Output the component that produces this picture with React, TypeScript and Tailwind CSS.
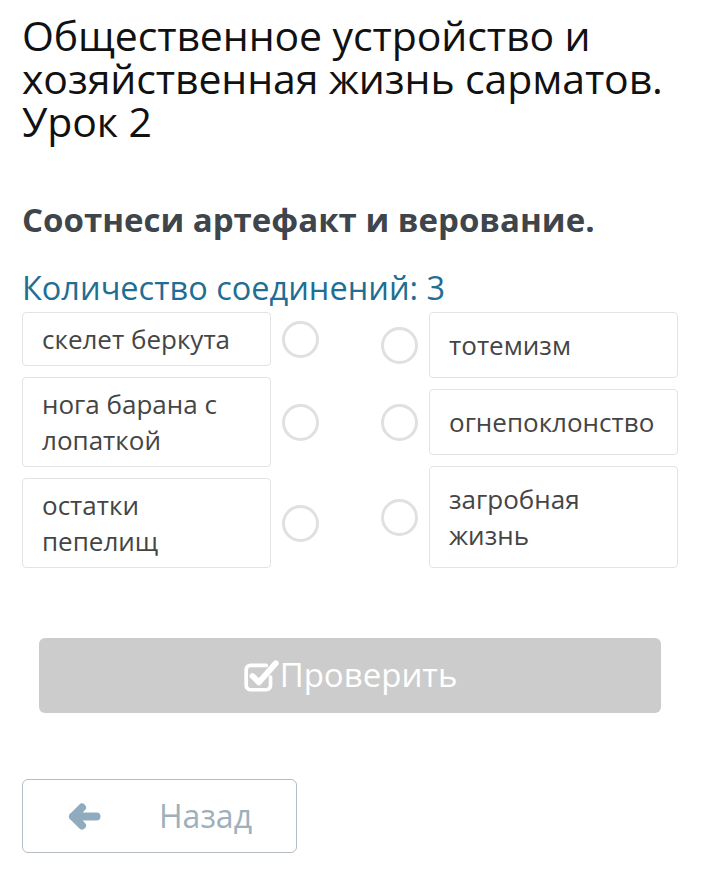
const leftItems = [
  { text: 'скелет беркута' },
  { text: 'нога барана с лопаткой' },
  { text: 'остатки пепелищ' },
];

const rightItems = [
  { text: 'тотемизм' },
  { text: 'огнепоклонство' },
  { text: 'загробная жизнь' },
];

function Dot() {
  return <div className="w-[37px] h-[37px] shrink-0 rounded-full border-[3px] border-[#e0e0e0] bg-white" />;
}

function CheckSquareIcon() {
  return (
    <svg width="36" height="36" viewBox="0 0 34 34" fill="none">
      <path d="M26 18v8a4 4 0 0 1-4 4H7a4 4 0 0 1-4-4V11a4 4 0 0 1 4-4h15" stroke="white" strokeWidth="3.5" strokeLinecap="round" />
      <path d="M9 17l6 6L31 5" stroke="white" strokeWidth="5.5" strokeLinecap="round" strokeLinejoin="round" />
    </svg>
  );
}

function BackArrow() {
  return (
    <svg width="33" height="27" viewBox="0 0 33 27" fill="none">
      <path d="M14 4.5L5 13.5L14 22.5M5 13.5H28.5" stroke="#90abbd" strokeWidth="8" strokeLinecap="round" strokeLinejoin="round" />
    </svg>
  );
}

export default function App() {
  return (
    <div className="min-h-[882px] bg-white font-['Open_Sans',sans-serif] pl-[22px] pr-[32px] pt-[14px]">
      {/* heading */}
      <h1 className="text-[41px] leading-[43px] text-[#111] tracking-[-0.1px]">
        Общественное устройство и хозяйственная жизнь сарматов. Урок 2
      </h1>

      <h2 className="mt-[57px] text-[33px] leading-[40px] font-bold text-[#3e454b]">
        Соотнеси артефакт и верование.
      </h2>

      <div className="mt-[29px] text-[32.5px] leading-[38px] text-[#1f6e93]">
        Количество соединений: 3
      </div>

      {/* matching columns */}
      <div className="mt-[5px] flex justify-between">
        <div className="flex flex-col gap-[11px]">
          {leftItems.map((it) => (
            <div key={it.text} className="flex items-center gap-[11px]">
              <div className="w-[249px] rounded-[4px] border border-[#e3e3e3] px-[19px] py-[8px] text-[26px] leading-[36px] text-[#454545]">
                {it.text}
              </div>
              <Dot />
            </div>
          ))}
        </div>
        <div className="flex flex-col gap-[11px]">
          {rightItems.map((it) => (
            <div key={it.text} className="flex items-center gap-[11px]">
              <Dot />
              <div className="w-[249px] rounded-[4px] border border-[#e3e3e3] px-[19px] py-[14px] text-[26px] leading-[36px] text-[#454545]">
                {it.text}
              </div>
            </div>
          ))}
        </div>
      </div>

      {/* check button */}
      <div className="mt-[70px] ml-[17px] mr-[17px] h-[75px] rounded-[6px] bg-[#cccccc] flex items-center justify-center text-white text-[33px]">
        <CheckSquareIcon />
        <span className="ml-[1px] -mt-[2px]">Проверить</span>
      </div>

      {/* back button */}
      <div className="mt-[66px] w-[275px] h-[74px] rounded-[6px] border border-[#b5bdc2] flex items-center">
        <div className="ml-[45px]">
          <BackArrow />
        </div>
        <span className="ml-[58px] text-[32px] text-[#9db0bc]">Назад</span>
      </div>
    </div>
  );
}
